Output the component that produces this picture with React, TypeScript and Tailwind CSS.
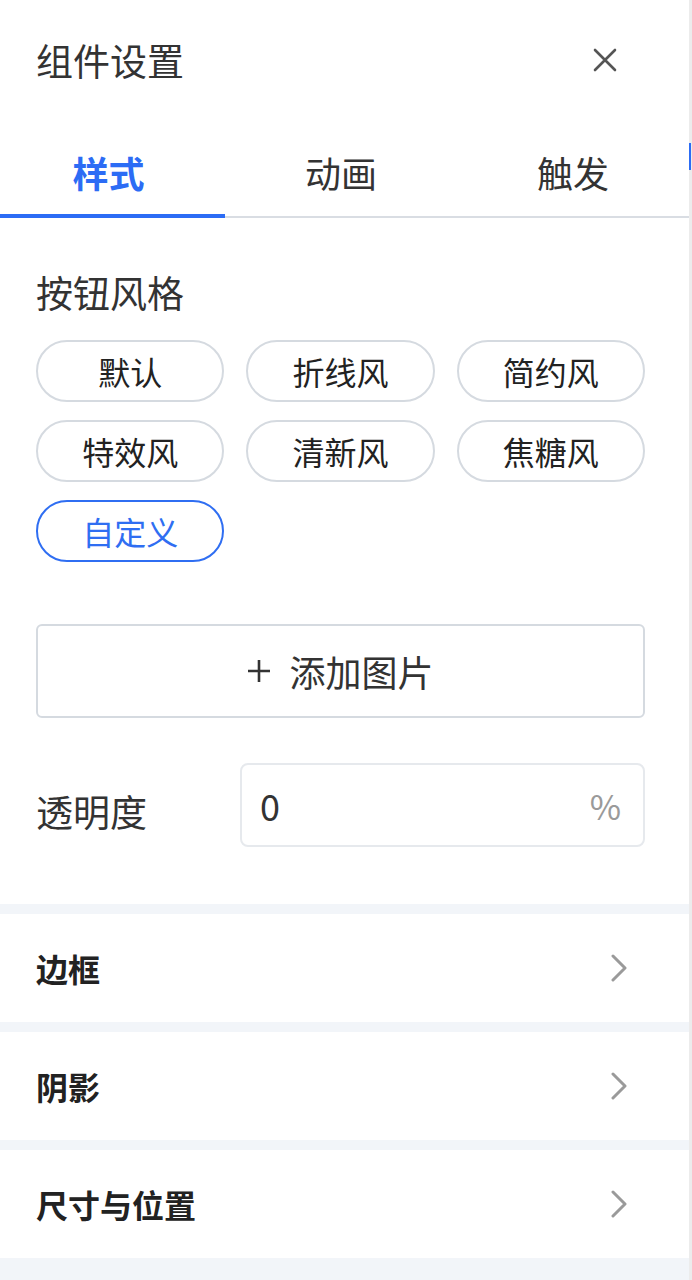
import { useState } from "react";

const styles = ["默认", "折线风", "简约风", "特效风", "清新风", "焦糖风", "自定义"];
const tabs = ["样式", "动画", "触发"];
const sections = ["边框", "阴影", "尺寸与位置"];

const Chevron = () => (
  <svg width="16" height="28" viewBox="0 0 16 28" fill="none">
    <polyline
      points="2,2 14,14 2,26"
      stroke="#9a9a9a"
      strokeWidth="3"
      strokeLinecap="round"
      strokeLinejoin="round"
    />
  </svg>
);

const App = () => {
  const [activeTab, setActiveTab] = useState(0);
  const [activeStyle, setActiveStyle] = useState(6);
  const [opacity, setOpacity] = useState("0");

  return (
    <div
      className="flex h-[1280px] w-[692px] overflow-hidden bg-white"
      style={{ fontFamily: '"Noto Sans CJK SC", "Noto Sans", sans-serif' }}
    >
      <div className="flex w-[689px] flex-col">
        {/* header */}
        <div className="flex h-[120px] items-center justify-between pl-[36px] pr-[72px]">
          <h1 className="text-[37px] leading-none text-[#333]">组件设置</h1>
          <button className="p-0">
            <svg width="24" height="24" viewBox="0 0 24 24" fill="none">
              <path
                d="M2 2L22 22M22 2L2 22"
                stroke="#555"
                strokeWidth="2.6"
                strokeLinecap="round"
              />
            </svg>
          </button>
        </div>

        {/* tabs */}
        <div className="flex border-b-2 border-[#d9dde3]">
          {tabs.map((tab, i) => (
            <button
              key={tab}
              onClick={() => setActiveTab(i)}
              className={`relative flex h-[96px] items-center justify-center pt-[8px] text-[36px] ${
                i === 0 ? "-ml-[8px] w-[233px]" : "w-[232px]"
              } ${activeTab === i ? "font-bold text-[#2c6cf5]" : "text-[#333]"}`}
            >
              {tab}
              {activeTab === i && (
                <span
                  className={`absolute bottom-[-2px] h-[4px] bg-[#2c6cf5] ${
                    i === 0 ? "left-[8px] right-[0px]" : "left-0 right-0"
                  }`}
                />
              )}
            </button>
          ))}
        </div>

        {/* style section */}
        <div className="pl-[36px] pr-[44px] pt-[52px] pb-[57px]">
          <div className="h-[44px] text-[37px] leading-[44px] text-[#333]">按钮风格</div>
          <div className="mt-[26px] grid grid-cols-3 gap-x-[22px] gap-y-[18px]">
            {styles.map((s, i) => (
              <button
                key={s}
                onClick={() => setActiveStyle(i)}
                className={`flex h-[62px] items-center justify-center rounded-full border-2 text-[32px] leading-none ${
                  activeStyle === i
                    ? "border-[#2f6ef2] text-[#2f6ef2]"
                    : "border-[#d5dae0] text-[#222]"
                }`}
              >
                {s}
              </button>
            ))}
          </div>

          <button className="mt-[62px] flex h-[94px] w-full items-center justify-center gap-[18px] rounded-[6px] border-2 border-[#d5dae0] text-[36px] text-[#333]">
            <svg width="24" height="24" viewBox="0 0 24 24" fill="none">
              <path d="M12 1V23M1 12H23" stroke="#333" strokeWidth="2.6" />
            </svg>
            添加图片
          </button>

          <div className="mt-[45px] flex items-center">
            <div className="w-[204px] pt-[12px] text-[37px] leading-none text-[#333]">透明度</div>
            <div className="flex h-[84px] flex-1 items-center rounded-[8px] border-2 border-[#e6e9ed] pl-[18px] pr-[22px]">
              <input
                value={opacity}
                onChange={(e) => setOpacity(e.target.value)}
                className="w-full bg-transparent text-[36px] text-[#333] outline-none"
              />
              <span className="text-[34px] text-[#9a9a9a]">%</span>
            </div>
          </div>
        </div>

        {/* collapsible sections */}
        {sections.map((s) => (
          <div key={s}>
            <div className="h-[10px] bg-[#f2f5f9]" />
            <div className="flex h-[108px] items-center justify-between pl-[36px] pr-[62px]">
              <span className="text-[32px] font-bold text-[#222]">{s}</span>
              <Chevron />
            </div>
          </div>
        ))}
        <div className="flex-1 bg-[#f2f5f9]" />
      </div>

      {/* scroll strip */}
      <div className="flex w-[3px] flex-col bg-[#ececec]">
        <div className="h-[143px]" />
        <div className="h-[27px] w-[2px] bg-[#2c6cf5]" />
      </div>
    </div>
  );
};

export default App;
